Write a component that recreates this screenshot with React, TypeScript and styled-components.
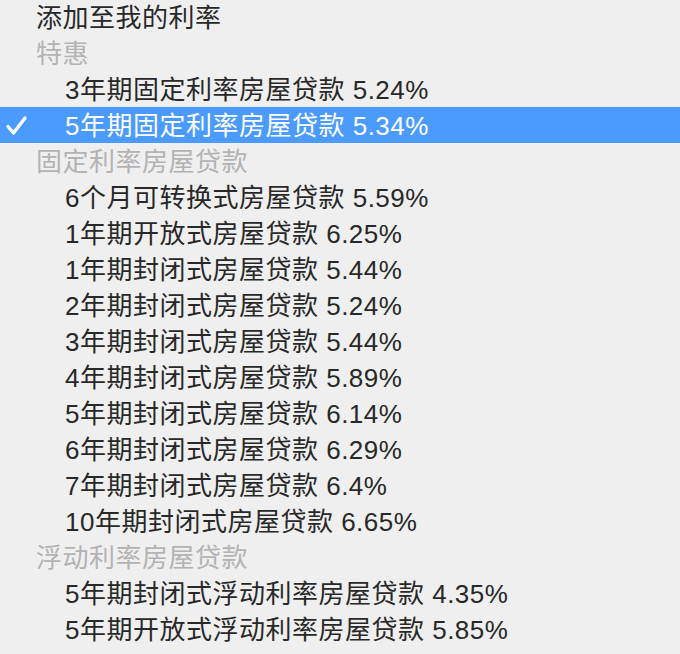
import React from "react";
import styled, { createGlobalStyle } from "styled-components";

const Global = createGlobalStyle`
  html, body { margin: 0; padding: 0; background: #efefef; }
  body { overflow: hidden; }
`;

const Menu = styled.div`
  width: 680px;
  margin-top: -1px;
  background: #efefef;
  font-family: "Liberation Sans", "Noto Sans CJK SC", sans-serif;
  font-size: 26px;
  letter-spacing: 0.5px;
  display: flex;
  flex-direction: column;
`;

const Row = styled.div<{ $indent: number; $kind: "item" | "header" | "selected" }>`
  position: relative;
  box-sizing: border-box;
  height: 36px;
  display: flex;
  align-items: center;
  padding-left: ${(p) => p.$indent}px;
  padding-bottom: 4px;
  white-space: nowrap;
  color: ${(p) => (p.$kind === "header" ? "#b3b3b3" : p.$kind === "selected" ? "#ffffff" : "#282828")};
  background: ${(p) => (p.$kind === "selected" ? "#4a9bfd" : "transparent")};
`;

const Check = styled.svg`
  position: absolute;
  left: 5px;
  top: 8px;
  width: 23px;
  height: 21px;
`;

type Entry = { text: string; kind: "item" | "header" | "selected"; indent: number };

const entries: Entry[] = [
  { text: "添加至我的利率", kind: "item", indent: 36 },
  { text: "特惠", kind: "header", indent: 36 },
  { text: "3年期固定利率房屋贷款 5.24%", kind: "item", indent: 65 },
  { text: "5年期固定利率房屋贷款 5.34%", kind: "selected", indent: 65 },
  { text: "固定利率房屋贷款", kind: "header", indent: 36 },
  { text: "6个月可转换式房屋贷款 5.59%", kind: "item", indent: 65 },
  { text: "1年期开放式房屋贷款 6.25%", kind: "item", indent: 65 },
  { text: "1年期封闭式房屋贷款 5.44%", kind: "item", indent: 65 },
  { text: "2年期封闭式房屋贷款 5.24%", kind: "item", indent: 65 },
  { text: "3年期封闭式房屋贷款 5.44%", kind: "item", indent: 65 },
  { text: "4年期封闭式房屋贷款 5.89%", kind: "item", indent: 65 },
  { text: "5年期封闭式房屋贷款 6.14%", kind: "item", indent: 65 },
  { text: "6年期封闭式房屋贷款 6.29%", kind: "item", indent: 65 },
  { text: "7年期封闭式房屋贷款 6.4%", kind: "item", indent: 65 },
  { text: "10年期封闭式房屋贷款 6.65%", kind: "item", indent: 65 },
  { text: "浮动利率房屋贷款", kind: "header", indent: 36 },
  { text: "5年期封闭式浮动利率房屋贷款 4.35%", kind: "item", indent: 65 },
  { text: "5年期开放式浮动利率房屋贷款 5.85%", kind: "item", indent: 65 },
];

export default function App() {
  return (
    <>
      <Global />
      <Menu>
        {entries.map((e, i) => (
          <Row key={i} $indent={e.indent} $kind={e.kind}>
            {e.kind === "selected" && (
              <Check viewBox="0 0 23 21">
                <path
                  d="M3 11.5 L8.5 18 L20 3"
                  fill="none"
                  stroke="#ffffff"
                  strokeWidth="3.4"
                  strokeLinecap="round"
                  strokeLinejoin="round"
                />
              </Check>
            )}
            <span>{e.text}</span>
          </Row>
        ))}
      </Menu>
    </>
  );
}
